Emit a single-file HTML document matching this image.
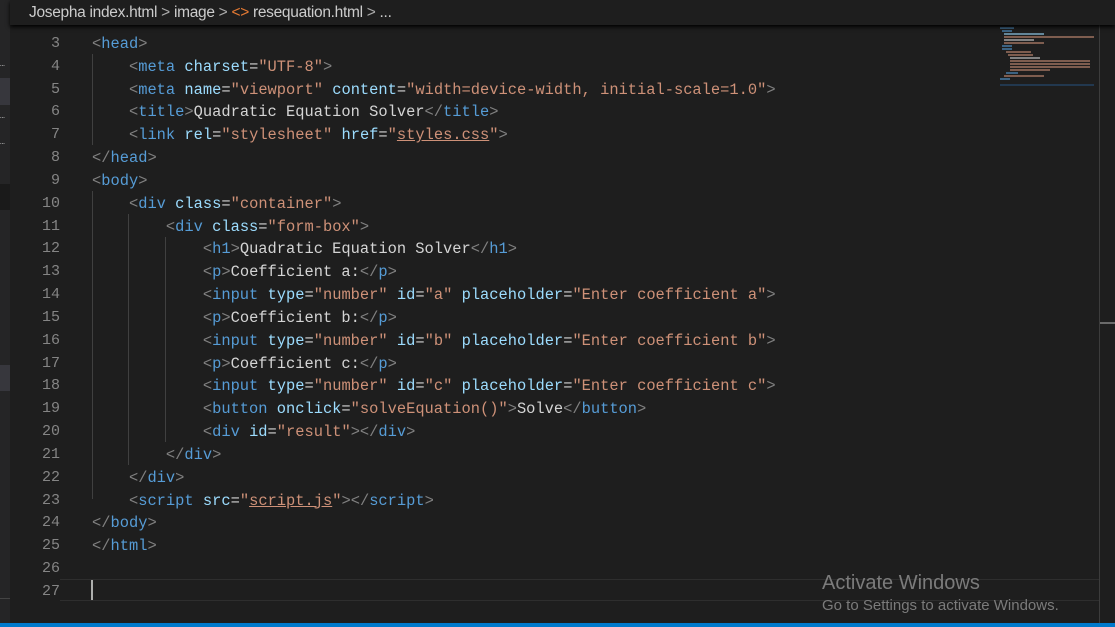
<!DOCTYPE html>
<html><head><meta charset="utf-8"><style>
body{margin:0;width:1115px;height:627px;background:#1e1e1e;overflow:hidden;position:relative;font-family:"Liberation Mono",monospace}
.side{position:absolute;left:0;top:0;width:10px;height:623px;background:#252526}
.crumb{position:absolute;left:10px;top:0;width:1105px;height:25px;background:#1e1e1e;box-shadow:0 2px 4px #000;z-index:2;font:15.5px "Liberation Sans",sans-serif;color:#cccccc;line-height:25px;letter-spacing:-0.3px}
.crumb span.s{color:#aaa}
.code{position:absolute;left:0;top:33px;font-size:15.4px;line-height:22.83px;white-space:pre;color:#d4d4d4}
.ln{position:absolute;left:20px;width:40px;text-align:right;color:#858585;font-size:15px}
.l{position:absolute;left:92px}
.p{color:#808080}.t{color:#569cd6}.a{color:#9cdcfe}.s{color:#ce9178}
.u{text-decoration:underline;text-decoration-color:#ce9178}
.g{position:absolute;width:1px;background:#404040}
.status{position:absolute;left:0;top:623px;width:1115px;height:4px;background:#007acc}
.aw{position:absolute;left:822px;top:572px;font-family:"Liberation Sans",sans-serif;color:#7b7b7b}
.mm div{height:2px}
</style></head><body>
<div class="side"></div>
<div style="position:absolute;left:0;top:78px;width:10px;height:27px;background:#37373d"></div>
<div style="position:absolute;left:0;top:184px;width:10px;height:26px;background:#1a1a1a"></div>
<div style="position:absolute;left:0;top:365px;width:10px;height:26px;background:#37373d"></div>
<div style="position:absolute;left:0;top:598px;width:10px;height:1px;background:#444"></div>
<div style="position:absolute;left:0;top:60px;font-size:8px;color:#ccc">…</div>
<div style="position:absolute;left:0;top:112px;font-size:8px;color:#ccc">…</div>
<div style="position:absolute;left:0;top:138px;font-size:8px;color:#ccc">…</div>
<div class="crumb"><span style="margin-left:19px">Josepha index.html <span class="s">&gt;</span> image <span class="s">&gt;</span> <span style="color:#e37933">&lt;&gt;</span> resequation.html <span class="s">&gt;</span> ...</span></div>
<div style="position:absolute;left:1099px;top:25px;width:1px;height:598px;background:#3c3c3c"></div>
<div style="position:absolute;left:1100px;top:322px;width:15px;height:2px;background:#6a6a6a"></div>
<div class="mm" style="position:absolute;left:1000px;top:25px;width:100px;height:55px;opacity:.55">
<div style="margin-top:2px;width:14px;background:#569cd6"></div>
<div style="margin:1px 0 0 2px;width:10px;background:#569cd6"></div>
<div style="margin:1px 0 0 4px;width:40px;background:#9cdcfe"></div>
<div style="margin:1px 0 0 4px;width:90px;background:#ce9178"></div>
<div style="margin:1px 0 0 4px;width:30px;background:#d4d4d4"></div>
<div style="margin:1px 0 0 4px;width:40px;background:#ce9178"></div>
<div style="margin:1px 0 0 2px;width:10px;background:#569cd6"></div>
<div style="margin:1px 0 0 2px;width:10px;background:#569cd6"></div>
<div style="margin:1px 0 0 6px;width:25px;background:#ce9178"></div>
<div style="margin:1px 0 0 8px;width:25px;background:#ce9178"></div>
<div style="margin:1px 0 0 10px;width:30px;background:#d4d4d4"></div>
<div style="margin:1px 0 0 10px;width:80px;background:#ce9178"></div>
<div style="margin:1px 0 0 10px;width:80px;background:#ce9178"></div>
<div style="margin:1px 0 0 10px;width:80px;background:#ce9178"></div>
<div style="margin:1px 0 0 10px;width:40px;background:#ce9178"></div>
<div style="margin:1px 0 0 6px;width:12px;background:#569cd6"></div>
<div style="margin:1px 0 0 4px;width:40px;background:#ce9178"></div>
<div style="margin:1px 0 0 0;width:10px;background:#569cd6"></div>
<div style="margin:4px 0 0 0;width:94px;background:#264f78"></div>
</div>
<div style="position:absolute;left:60px;top:579px;width:1039px;height:22px;border-top:1px solid #2e2e2e;border-bottom:1px solid #2e2e2e;box-sizing:border-box"></div>
<div style="position:absolute;left:91px;top:580px;width:2px;height:20px;background:#aeafad"></div>
<div class="g" style="left:92px;top:54px;height:91px"></div>
<div class="g" style="left:92px;top:191px;height:308px"></div>
<div class="g" style="left:128px;top:214px;height:251px"></div>
<div class="g" style="left:165px;top:237px;height:205px"></div>
<div class="code">
<div class="ln" style="top:0">3</div><div class="l" style="top:0"><span class="p">&lt;</span><span class="t">head</span><span class="p">&gt;</span></div>
<div class="ln" style="top:22.83px">4</div><div class="l" style="top:22.83px">    <span class="p">&lt;</span><span class="t">meta</span> <span class="a">charset</span>=<span class="s">"UTF-8"</span><span class="p">&gt;</span></div>
<div class="ln" style="top:45.66px">5</div><div class="l" style="top:45.66px">    <span class="p">&lt;</span><span class="t">meta</span> <span class="a">name</span>=<span class="s">"viewport"</span> <span class="a">content</span>=<span class="s">"width=device-width, initial-scale=1.0"</span><span class="p">&gt;</span></div>
<div class="ln" style="top:68.49px">6</div><div class="l" style="top:68.49px">    <span class="p">&lt;</span><span class="t">title</span><span class="p">&gt;</span>Quadratic Equation Solver<span class="p">&lt;/</span><span class="t">title</span><span class="p">&gt;</span></div>
<div class="ln" style="top:91.32px">7</div><div class="l" style="top:91.32px">    <span class="p">&lt;</span><span class="t">link</span> <span class="a">rel</span>=<span class="s">"stylesheet"</span> <span class="a">href</span>=<span class="s">"<span class="u">styles.css</span>"</span><span class="p">&gt;</span></div>
<div class="ln" style="top:114.15px">8</div><div class="l" style="top:114.15px"><span class="p">&lt;/</span><span class="t">head</span><span class="p">&gt;</span></div>
<div class="ln" style="top:136.98px">9</div><div class="l" style="top:136.98px"><span class="p">&lt;</span><span class="t">body</span><span class="p">&gt;</span></div>
<div class="ln" style="top:159.81px">10</div><div class="l" style="top:159.81px">    <span class="p">&lt;</span><span class="t">div</span> <span class="a">class</span>=<span class="s">"container"</span><span class="p">&gt;</span></div>
<div class="ln" style="top:182.64px">11</div><div class="l" style="top:182.64px">        <span class="p">&lt;</span><span class="t">div</span> <span class="a">class</span>=<span class="s">"form-box"</span><span class="p">&gt;</span></div>
<div class="ln" style="top:205.47px">12</div><div class="l" style="top:205.47px">            <span class="p">&lt;</span><span class="t">h1</span><span class="p">&gt;</span>Quadratic Equation Solver<span class="p">&lt;/</span><span class="t">h1</span><span class="p">&gt;</span></div>
<div class="ln" style="top:228.3px">13</div><div class="l" style="top:228.3px">            <span class="p">&lt;</span><span class="t">p</span><span class="p">&gt;</span>Coefficient a:<span class="p">&lt;/</span><span class="t">p</span><span class="p">&gt;</span></div>
<div class="ln" style="top:251.13px">14</div><div class="l" style="top:251.13px">            <span class="p">&lt;</span><span class="t">input</span> <span class="a">type</span>=<span class="s">"number"</span> <span class="a">id</span>=<span class="s">"a"</span> <span class="a">placeholder</span>=<span class="s">"Enter coefficient a"</span><span class="p">&gt;</span></div>
<div class="ln" style="top:273.96px">15</div><div class="l" style="top:273.96px">            <span class="p">&lt;</span><span class="t">p</span><span class="p">&gt;</span>Coefficient b:<span class="p">&lt;/</span><span class="t">p</span><span class="p">&gt;</span></div>
<div class="ln" style="top:296.79px">16</div><div class="l" style="top:296.79px">            <span class="p">&lt;</span><span class="t">input</span> <span class="a">type</span>=<span class="s">"number"</span> <span class="a">id</span>=<span class="s">"b"</span> <span class="a">placeholder</span>=<span class="s">"Enter coefficient b"</span><span class="p">&gt;</span></div>
<div class="ln" style="top:319.62px">17</div><div class="l" style="top:319.62px">            <span class="p">&lt;</span><span class="t">p</span><span class="p">&gt;</span>Coefficient c:<span class="p">&lt;/</span><span class="t">p</span><span class="p">&gt;</span></div>
<div class="ln" style="top:342.45px">18</div><div class="l" style="top:342.45px">            <span class="p">&lt;</span><span class="t">input</span> <span class="a">type</span>=<span class="s">"number"</span> <span class="a">id</span>=<span class="s">"c"</span> <span class="a">placeholder</span>=<span class="s">"Enter coefficient c"</span><span class="p">&gt;</span></div>
<div class="ln" style="top:365.28px">19</div><div class="l" style="top:365.28px">            <span class="p">&lt;</span><span class="t">button</span> <span class="a">onclick</span>=<span class="s">"solveEquation()"</span><span class="p">&gt;</span>Solve<span class="p">&lt;/</span><span class="t">button</span><span class="p">&gt;</span></div>
<div class="ln" style="top:388.11px">20</div><div class="l" style="top:388.11px">            <span class="p">&lt;</span><span class="t">div</span> <span class="a">id</span>=<span class="s">"result"</span><span class="p">&gt;&lt;/</span><span class="t">div</span><span class="p">&gt;</span></div>
<div class="ln" style="top:410.94px">21</div><div class="l" style="top:410.94px">        <span class="p">&lt;/</span><span class="t">div</span><span class="p">&gt;</span></div>
<div class="ln" style="top:433.77px">22</div><div class="l" style="top:433.77px">    <span class="p">&lt;/</span><span class="t">div</span><span class="p">&gt;</span></div>
<div class="ln" style="top:456.6px">23</div><div class="l" style="top:456.6px">    <span class="p">&lt;</span><span class="t">script</span> <span class="a">src</span>=<span class="s">"<span class="u">script.js</span>"</span><span class="p">&gt;&lt;/</span><span class="t">script</span><span class="p">&gt;</span></div>
<div class="ln" style="top:479.43px">24</div><div class="l" style="top:479.43px"><span class="p">&lt;/</span><span class="t">body</span><span class="p">&gt;</span></div>
<div class="ln" style="top:502.26px">25</div><div class="l" style="top:502.26px"><span class="p">&lt;/</span><span class="t">html</span><span class="p">&gt;</span></div>
<div class="ln" style="top:525.09px">26</div>
<div class="ln" style="top:547.92px">27</div>
</div>
<div class="aw"><div style="font-size:20px">Activate Windows</div><div style="font-size:15px;margin-top:2px">Go to Settings to activate Windows.</div></div>
<div class="status"></div>
</body></html>
